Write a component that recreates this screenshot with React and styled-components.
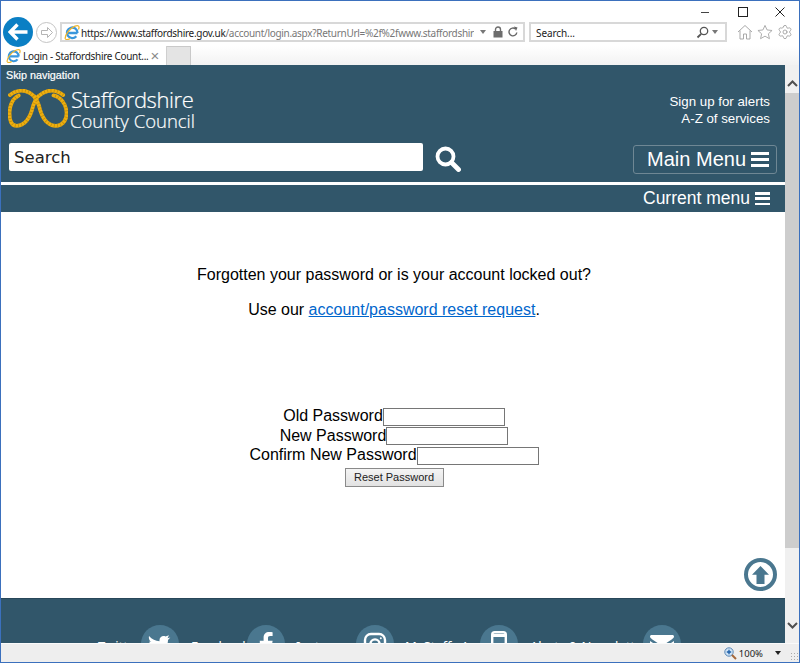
import * as React from "react";
import styled, { createGlobalStyle } from "styled-components";
import { Settings } from "lucide-react";

const Arial = `"Liberation Sans", Arial, sans-serif`;

function IeLogo({ size = 16 }) {
  return (
    <IeSvg width={size} height={size} viewBox="0 0 16 16">
      <path d="M3.500 9h10M12.300 12.200A5.300 5.300 0 1 1 13.500 9" fill="none" stroke="#3a97dc" strokeWidth="2.300" />
      <path d="M1.300 14.800C.5 11 6 4.500 11 2.200c3.500-1.500 4.800.3 3.500 3.300" fill="none" stroke="#efb52c" strokeWidth="1.300" />
      <path d="M1.300 14.800c1 1 3.200.6 4.800-.4" fill="none" stroke="#efb52c" strokeWidth="1.200" />
    </IeSvg>
  );
}

function Knot() {
  const ropeA = "M2 6C7 2 13 1 18 2C26 4 30 10 32 17C34 26 38 37 49 38C57 38 61 31 60.500 24C60 15 54 8 47 6.500";
  const ropeB = "M57 6C52 2 46 1 41 2C33 4 28 10 26 17C24 26 20 37 9 38C3 38 1.500 31 1.500 24C2 15 6 9 11 6.500";
  return (
    <KnotSvg viewBox="0 0 62 41" width="60" height="40">
      {[ropeB, ropeA].map((d) => (
        <g key={d}>
          <path d={d} fill="none" stroke="#eeae0e" strokeWidth="3.900" strokeLinecap="round" />
          <path d={d} fill="none" stroke="#bb8a0b" strokeWidth="3.900" strokeDasharray="0.7 2.600" />
        </g>
      ))}
    </KnotSvg>
  );
}

function Burger({ width = 17, height = 14, bar = 3 }) {
  return (
    <BurgerBox $width={width} $height={height}>
      <BurgerBar $bar={bar} />
      <BurgerBar $bar={bar} />
      <BurgerBar $bar={bar} />
    </BurgerBox>
  );
}

const socials = [
  { label: "Twitter", width: 43, gap: 12 },
  { label: "Facebook", width: 56, gap: 11 },
  { label: "Instagram", width: 60, gap: 11 },
  { label: "MyStaffs App", width: 75, gap: 12 },
  { label: "Alerts & Newsletters", width: 113, gap: 0 },
];

function SocialIcon({ index }) {
  if (index === 0) {
    return (
      <svg width="24" height="20" viewBox="0 0 24 20">
        <path fill="#fff" d="M1 2c3 3.500 6.500 5 10.500 5.200C11 3.500 14.500 1 17.500 2.600l3.500-1.300-1.500 3 2.800-.7-2.300 2.500C20 13 14 19 7.500 19 4.800 19 2.500 18.300.5 17c2.500.2 4.600-.4 6.500-1.900-2-.1-3.400-1.100-4.100-3h2C2.800 11.500 1.500 9.800 1.400 7.500l2 .6C1.200 6.500.5 4.300 1 2z" />
      </svg>
    );
  }
  if (index === 1) {
    return (
      <svg width="14" height="24" viewBox="0 0 14 24">
        <path fill="#fff" d="M9 24V13h4l.6-4.300H9V6c0-1.300.4-2.100 2.200-2.100h2.400V.2C13.200.1 11.800 0 10.200 0 6.900 0 4.600 2 4.600 5.700v3H.8V13h3.800v11z" />
      </svg>
    );
  }
  if (index === 2) {
    return (
      <svg width="24" height="24" viewBox="0 0 24 24" fill="none" stroke="#fff" strokeWidth="2.400">
        <rect x="2" y="2" width="20" height="20" rx="6" />
        <circle cx="12" cy="12" r="4.600" />
        <circle cx="17.800" cy="6.200" r="1" fill="#fff" stroke="none" />
      </svg>
    );
  }
  if (index === 3) {
    return (
      <svg width="16" height="26" viewBox="0 0 16 26">
        <rect x="1.200" y="1.200" width="13.600" height="23.600" rx="2.500" fill="none" stroke="#fff" strokeWidth="2.400" />
        <rect x="1" y="3" width="14" height="3" fill="#fff" />
      </svg>
    );
  }
  return (
    <svg width="24" height="18" viewBox="0 0 24 18">
      <path fill="#fff" d="M0 1.500C0 .7.700 0 1.500 0h21c.8 0 1.500.7 1.500 1.500 0 1-1 2-2 2.700L12 11 2 4.200C1 3.500 0 2.500 0 1.500zM0 6l12 8 12-8v10.500c0 .8-.7 1.500-1.500 1.500h-21C.7 18 0 17.300 0 16.500z" />
    </svg>
  );
}

export default function App() {
  return (
    <>
      <GlobalStyle />
      <Frame>
        <Chrome>
          <CaptionBar>
            <CaptionButton title="Minimize">
              <svg width="10" height="10" viewBox="0 0 10 10"><path d="M1 5.500h8" stroke="#444" /></svg>
            </CaptionButton>
            <CaptionButton title="Maximize">
              <svg width="10" height="10" viewBox="0 0 10 10"><rect x=".5" y=".5" width="9" height="9" fill="none" stroke="#222" /></svg>
            </CaptionButton>
            <CaptionButton title="Close">
              <svg width="10" height="10" viewBox="0 0 10 10"><path d="M.5.500l9 9M9.500.500l-9 9" stroke="#222" /></svg>
            </CaptionButton>
          </CaptionBar>
          <NavRow>
            <BackButton>
              <svg width="20" height="18" viewBox="0 0 20 18">
                <path d="M9.500 1.500L2.200 9l7.300 7.500M3 9h16.500" fill="none" stroke="#fff" strokeWidth="3.400" />
              </svg>
            </BackButton>
            <ForwardButton>
              <svg width="14" height="13" viewBox="0 0 14 13">
                <path d="M7.500 1.500l5 5-5 5v-3H1.500v-4h6z" fill="none" stroke="#b5b5b5" />
              </svg>
            </ForwardButton>
            <AddressBox>
              <IeLogo />
              <AddressText>
                <strong>https://www.staffordshire.gov.uk</strong>/account/login.aspx?ReturnUrl=%2f%2fwww.staffordshire
              </AddressText>
              <DropCaret />
              <svg width="12" height="12" viewBox="0 0 12 12">
                <path d="M3.500 5V3.500a2.500 2.500 0 0 1 5 0V5" fill="none" stroke="#6d6d6d" strokeWidth="1.400" />
                <rect x="1.500" y="5" width="9" height="6.500" fill="#6d6d6d" />
              </svg>
              <svg width="12" height="12" viewBox="0 0 12 12">
                <path d="M9.800 6.500A3.900 3.900 0 1 1 8.500 3" fill="none" stroke="#666" strokeWidth="1.400" />
                <path d="M7 .5l3.500 1-1.500 3.500z" fill="#666" />
              </svg>
            </AddressBox>
            <SearchBox>
              <SearchText>Search...</SearchText>
              <svg width="13" height="13" viewBox="0 0 13 13">
                <circle cx="8" cy="5" r="3.700" fill="none" stroke="#555" strokeWidth="1.300" />
                <path d="M5.200 7.800L1.500 11.500" stroke="#555" strokeWidth="1.800" />
              </svg>
              <DropCaret />
            </SearchBox>
            <ToolIcons>
              <svg width="16" height="16" viewBox="0 0 16 16" fill="none" stroke="#a9a9a9">
                <path d="M1 8l7-6.500L15 8M3 6.500V15h3.500v-5h3v5H13V6.500" />
              </svg>
              <svg width="16" height="16" viewBox="0 0 17 16" fill="none" stroke="#a9a9a9">
                <path d="M8.500 1l2.200 4.800 5.300.6-3.900 3.500 1.100 5.200-4.700-2.700-4.700 2.700 1.100-5.200L1 6.400l5.300-.6z" />
              </svg>
              <Settings size={16} color="#a0a0a0" strokeWidth={1.300} />
            </ToolIcons>
          </NavRow>
          <TabRow>
            <ActiveTab>
              <IeLogo size={15} />
              <TabTitle>Login - Staffordshire Count...</TabTitle>
              <TabClose>×</TabClose>
            </ActiveTab>
            <NewTab />
          </TabRow>
        </Chrome>

        <Viewport>
          <Page>
            <Header>
              <SkipLink>Skip navigation</SkipLink>
              <BrandRow>
                <Brand>
                  <Knot />
                  <BrandText>
                    <BrandMain>Staffordshire</BrandMain>
                    <BrandSub>County Council</BrandSub>
                  </BrandText>
                </Brand>
                <HeaderLinks>
                  <span>Sign up for alerts</span>
                  <span>A-Z of services</span>
                </HeaderLinks>
              </BrandRow>
              <SearchRow>
                <SiteSearch>Search</SiteSearch>
                <SearchIcon viewBox="0 0 26 26" width="26" height="26">
                  <circle cx="10.500" cy="10.500" r="8" fill="none" stroke="#fff" strokeWidth="3.800" />
                  <path d="M16.500 16.500l7 7" stroke="#fff" strokeWidth="4.800" strokeLinecap="round" />
                </SearchIcon>
                <MainMenu>
                  Main Menu
                  <Burger width={18} height={15} bar={3} />
                </MainMenu>
              </SearchRow>
            </Header>
            <CurrentBar>
              Current menu
              <Burger width={15} height={13} bar={2.500} />
            </CurrentBar>

            <Content>
              <Notice>Forgotten your password or is your account locked out?</Notice>
              <Notice>
                Use our <ResetLink href="#">account/password reset request</ResetLink>.
              </Notice>
              <ResetForm>
                <FormLine><FieldLabel>Old Password</FieldLabel><Field /></FormLine>
                <FormLine><FieldLabel>New Password</FieldLabel><Field /></FormLine>
                <FormLine><FieldLabel>Confirm New Password</FieldLabel><Field /></FormLine>
                <Submit type="button">Reset Password</Submit>
              </ResetForm>
            </Content>

            <ToTop>
              <svg width="17" height="18" viewBox="0 0 17 18">
                <path d="M8.500 0L17 8.800h-4.500V18h-8V8.800H0z" fill="#4a778f" />
              </svg>
            </ToTop>

            <Footer>
              {socials.map((s, i) => (
                <SocialItem key={s.label} $gap={s.gap}>
                  <SocialLabel $width={s.width}>{s.label}</SocialLabel>
                  <SocialCircle>
                    <SocialIcon index={i} />
                  </SocialCircle>
                </SocialItem>
              ))}
            </Footer>
          </Page>
          <Scrollbar>
            <ScrollArrow>
              <svg width="11" height="7" viewBox="0 0 11 7"><path d="M1 6l4.500-4.500L10 6" fill="none" stroke="#505050" strokeWidth="2" /></svg>
            </ScrollArrow>
            <ScrollThumb />
            <ScrollTrack />
            <ScrollArrow $down>
              <svg width="11" height="7" viewBox="0 0 11 7"><path d="M1 1l4.500 4.500L10 1" fill="none" stroke="#505050" strokeWidth="2" /></svg>
            </ScrollArrow>
          </Scrollbar>
        </Viewport>

        <StatusBar>
          <svg width="13" height="13" viewBox="0 0 13 13">
            <circle cx="5" cy="5" r="4.200" fill="#cfe3f5" stroke="#5a87b5" />
            <path d="M5 2.800v4.400M2.800 5h4.400" stroke="#1d5fa8" strokeWidth="1.300" />
            <path d="M8 8l4 4" stroke="#a5683a" strokeWidth="2" />
          </svg>
          <ZoomLevel>100%</ZoomLevel>
          <DarkCaret />
          <Grip />
        </StatusBar>
      </Frame>
    </>
  );
}

const GlobalStyle = createGlobalStyle`
  html, body {
    margin: 0;
    padding: 0;
    height: 100%;
    overflow: hidden;
    background: #fff;
    font-family: ${Arial};
  }
`;

const Frame = styled.div`
  width: 800px;
  height: 663px;
  box-sizing: border-box;
  border: 1px solid #3b70bd;
  display: flex;
  flex-direction: column;
  overflow: hidden;
`;

const Chrome = styled.div`
  height: 64px;
  flex: none;
  background: linear-gradient(#fff 0, #fff 45px, #f2f2f2 64px);
`;

const CaptionBar = styled.div`
  height: 17px;
  display: flex;
  justify-content: flex-end;
  align-items: center;
  padding: 5px 0 0 0;
  box-sizing: border-box;
`;

const CaptionButton = styled.div`
  width: 37.500px;
  display: flex;
  justify-content: center;
`;

const NavRow = styled.div`
  height: 28px;
  display: flex;
  align-items: center;
  padding-left: 2px;
`;

const BackButton = styled.div`
  width: 30px;
  height: 30px;
  margin-top: -1px;
  border-radius: 50%;
  background: #0b7fc4;
  display: flex;
  align-items: center;
  justify-content: center;
  position: relative;
  z-index: 1;
  flex: none;
`;

const ForwardButton = styled.div`
  width: 21px;
  height: 21px;
  margin-left: 3px;
  box-sizing: border-box;
  border: 1px solid #c4c4c4;
  border-radius: 50%;
  display: flex;
  align-items: center;
  justify-content: center;
  flex: none;
`;

const AddressBox = styled.div`
  width: 465px;
  height: 20px;
  margin-left: 3px;
  box-sizing: border-box;
  border: 2px solid #d8d8d8;
  padding: 0 4px 0 2px;
  display: flex;
  align-items: center;
  gap: 3px;
  flex: none;
  background: #fff;
`;

const AddressText = styled.div`
  flex: 1;
  overflow: hidden;
  white-space: nowrap;
  margin-left: -2px;
  padding-top: 1px;
  font-family: "Noto Sans", sans-serif;
  font-size: 10px;
  letter-spacing: -0.3px;
  color: #777;

  strong {
    font-weight: 400;
    color: #222;
  }
`;

const DropCaret = styled.span`
  width: 0;
  height: 0;
  margin: 0 3px;
  border-left: 3.500px solid transparent;
  border-right: 3.500px solid transparent;
  border-top: 4px solid #777;
  flex: none;
`;

const SearchBox = styled(AddressBox)`
  width: 198px;
  margin-left: 4px;
  padding: 0 4px 0 5px;
  gap: 0;
`;

const SearchText = styled.div`
  flex: 1;
  padding-top: 1px;
  font-family: "Noto Sans", sans-serif;
  font-size: 10px;
  letter-spacing: -0.1px;
  color: #222;
`;

const ToolIcons = styled.div`
  display: flex;
  align-items: center;
  gap: 4px;
  margin-left: 10px;
`;

const TabRow = styled.div`
  height: 19px;
  display: flex;
  align-items: flex-end;
`;

const ActiveTab = styled.div`
  width: 166px;
  height: 19px;
  box-sizing: border-box;
  padding: 0 7px 0 5px;
  display: flex;
  align-items: center;
  gap: 2px;
  background: #fff;
  border-right: 1px solid #cfcfcf;
`;

const IeSvg = styled.svg`
  flex: none;
`;

const TabTitle = styled.span`
  flex: 1;
  white-space: nowrap;
  font-family: "Noto Sans", sans-serif;
  font-size: 10px;
  letter-spacing: -0.3px;
  color: #222;
`;

const TabClose = styled.span`
  font-size: 15px;
  line-height: 15px;
  color: #8a8a8a;
`;

const NewTab = styled.div`
  width: 24px;
  height: 19px;
  box-sizing: border-box;
  background: #e4e4e4;
  border: 1px solid #c9c9c9;
  border-bottom: none;
  border-left: none;
`;

const Viewport = styled.div`
  flex: 1;
  min-height: 0;
  display: flex;
  overflow: hidden;
`;

const Page = styled.div`
  flex: 1;
  min-width: 0;
  position: relative;
  overflow: hidden;
  background: #fff;
`;

const Header = styled.header`
  height: 117px;
  box-sizing: border-box;
  background: #31566a;
  padding: 3px 8px 0 5px;
  color: #fff;
`;

const SkipLink = styled.div`
  font-size: 10.800px;
  line-height: 14px;
  -webkit-text-stroke: 0.2px #fff;
`;

const BrandRow = styled.div`
  display: flex;
  justify-content: space-between;
  align-items: flex-start;
  margin-top: 3px;
  height: 58px;
`;

const Brand = styled.div`
  display: flex;
  align-items: flex-start;
  padding-left: 2px;
`;

const KnotSvg = styled.svg`
  flex: none;
  margin-right: 3px;
  margin-top: 4px;
`;

const BrandText = styled.div`
  display: flex;
  flex-direction: column;
  font-family: "Open Sans", sans-serif;
  font-weight: 300;
  padding-top: 2px;
  -webkit-text-stroke: 0.2px #fff;
`;

const BrandMain = styled.span`
  font-size: 22px;
  line-height: 24px;
  letter-spacing: -0.4px;
`;

const BrandSub = styled.span`
  font-size: 18.500px;
  line-height: 20px;
  margin-left: -1px;
`;

const HeaderLinks = styled.div`
  display: flex;
  flex-direction: column;
  align-items: flex-end;
  font-size: 13.300px;
  line-height: 17px;
  margin-top: 8px;
  margin-right: 7px;
`;

const SearchRow = styled.div`
  display: flex;
  align-items: flex-start;
  padding-left: 3px;
`;

const SiteSearch = styled.div`
  width: 414px;
  height: 28px;
  box-sizing: border-box;
  padding-left: 5px;
  background: #fff;
  border-radius: 2px;
  font-family: "DejaVu Sans", sans-serif;
  font-size: 16.500px;
  line-height: 29px;
  color: #222;
`;

const SearchIcon = styled.svg`
  margin: 3px 0 0 12px;
  flex: none;
`;

const MainMenu = styled.div`
  width: 144px;
  height: 29px;
  margin: 2px 0 0 auto;
  box-sizing: border-box;
  border: 1px solid #6f8794;
  border-radius: 3px;
  padding-right: 7px;
  display: flex;
  align-items: center;
  justify-content: flex-end;
  gap: 5px;
  font-size: 20px;
`;

const BurgerBox = styled.span`
  width: ${(p) => p.$width}px;
  height: ${(p) => p.$height}px;
  display: flex;
  flex-direction: column;
  justify-content: space-between;
  flex: none;
`;

const BurgerBar = styled.i`
  display: block;
  height: ${(p) => p.$bar}px;
  background: #fff;
`;

const CurrentBar = styled.div`
  height: 27px;
  margin-top: 3px;
  box-sizing: border-box;
  padding-right: 15px;
  background: #31566a;
  color: #fff;
  display: flex;
  align-items: center;
  justify-content: flex-end;
  gap: 5px;
  font-size: 17.500px;
`;

const Content = styled.main`
  height: 386px;
  box-sizing: border-box;
  padding: 54px 0 0 2px;
  text-align: center;
  font-size: 16px;
  line-height: 18px;
  color: #000;
`;

const Notice = styled.p`
  margin: 0 0 17px 0;
`;

const ResetLink = styled.a`
  color: #0066cc;
`;

const ResetForm = styled.form`
  margin-top: 88px;
  line-height: 19.500px;
`;

const FormLine = styled.div`
  height: 19.500px;
  display: flex;
  justify-content: center;
  align-items: center;
`;

const FieldLabel = styled.span`
  margin-bottom: 2px;
`;

const Field = styled.div`
  width: 122px;
  height: 18px;
  box-sizing: border-box;
  border: 1px solid #767676;
  background: #fff;
`;

const Submit = styled.button`
  display: block;
  width: 99px;
  height: 19px;
  margin: 2px auto 0;
  padding: 0;
  box-sizing: border-box;
  border: 1px solid #8a8a8a;
  background: linear-gradient(#f4f4f4, #e2e2e2);
  font-family: ${Arial};
  font-size: 11px;
  color: #222;
`;

const ToTop = styled.div`
  position: absolute;
  left: 743px;
  top: 493px;
  width: 33px;
  height: 33px;
  box-sizing: border-box;
  border: 4px solid #4a778f;
  border-radius: 50%;
  background: #fff;
  display: flex;
  align-items: center;
  justify-content: center;
`;

const Footer = styled.footer`
  height: 120px;
  box-sizing: border-box;
  background: #31566a;
  border-top: 1px solid #284759;
  padding: 26px 0 0 97px;
  display: flex;
  align-items: flex-start;
  color: #fff;
`;

const SocialItem = styled.div`
  display: flex;
  align-items: flex-start;
  margin-right: ${(p) => p.$gap}px;
`;

const SocialLabel = styled.span`
  width: ${(p) => p.$width}px;
  font-family: "Noto Sans", sans-serif;
  font-size: 13px;
  line-height: 18px;
  margin-top: 12px;
  white-space: nowrap;
`;

const SocialCircle = styled.div`
  width: 38px;
  height: 38px;
  border-radius: 50%;
  background: #4a778f;
  display: flex;
  align-items: center;
  justify-content: center;
  flex: none;
`;

const Scrollbar = styled.div`
  width: 14px;
  flex: none;
  display: flex;
  flex-direction: column;
  background: #f0f0f0;
`;

const ScrollArrow = styled.div`
  height: 28px;
  flex: none;
  display: flex;
  align-items: center;
  justify-content: center;
  padding: ${(p) => (p.$down ? "0 0 8px" : "8px 0 0")};
  box-sizing: border-box;
`;

const ScrollThumb = styled.div`
  height: 455px;
  flex: none;
  background: #cdcdcd;
`;

const ScrollTrack = styled.div`
  flex: 1;
`;

const StatusBar = styled.div`
  height: 19px;
  flex: none;
  background: #eeeeee;
  border-top: 1px solid #fafafa;
  box-sizing: border-box;
  display: flex;
  align-items: center;
  justify-content: flex-end;
  padding-right: 1px;
`;

const ZoomLevel = styled.span`
  font-family: "Noto Sans", sans-serif;
  font-size: 9.500px;
  color: #222;
  margin-left: 2px;
`;

const DarkCaret = styled.span`
  width: 0;
  height: 0;
  margin: 0 9px 0 12px;
  border-left: 3.500px solid transparent;
  border-right: 3.500px solid transparent;
  border-top: 4px solid #222;
`;

const Grip = styled.span`
  width: 8px;
  height: 8px;
  margin-top: 6px;
  background-image: radial-gradient(#aaa 40%, transparent 45%);
  background-size: 3px 3px;
`;
